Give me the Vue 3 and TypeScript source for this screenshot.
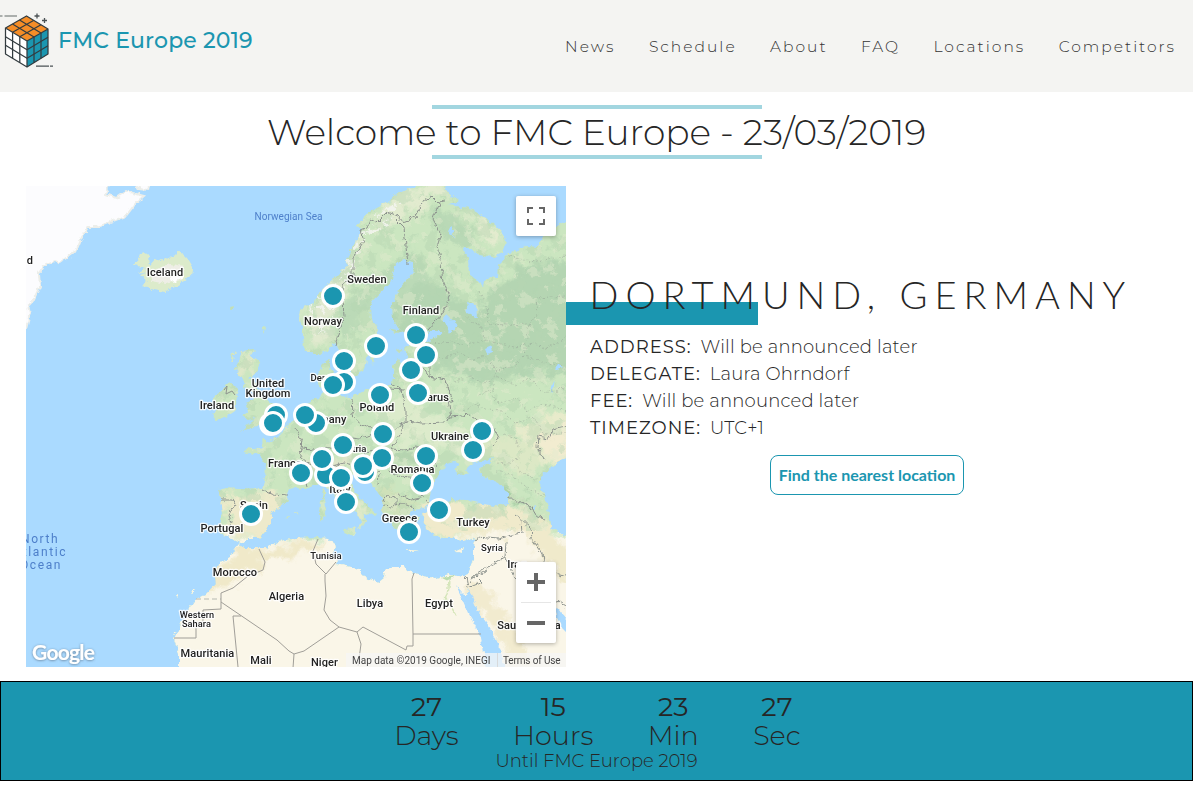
<script setup lang="ts">
interface Label { t: string; x: number; y: number; s?: number }

const nav = ['News', 'Schedule', 'About', 'FAQ', 'Locations', 'Competitors']

const details = [
  { label: 'ADDRESS:', value: 'Will be announced later' },
  { label: 'DELEGATE:', value: 'Laura Ohrndorf' },
  { label: 'FEE:', value: 'Will be announced later' },
  { label: 'TIMEZONE:', value: 'UTC+1' },
]

const countdown = [
  { n: 27, unit: 'Days' },
  { n: 15, unit: 'Hours' },
  { n: 23, unit: 'Min' },
  { n: 27, unit: 'Sec' },
]

// Pin centres in map coordinates, back to front
const pins: [number, number][] = [
  [307, 110], [390, 149], [350, 160], [400, 169], [385, 184], [318, 175], [318, 196], [307, 199],
  [354, 209], [392, 207], [250, 229], [245, 238], [247, 237], [290, 237], [279, 229], [357, 248], [456, 245],
  [447, 264], [317, 259], [356, 272], [339, 286], [337, 280], [400, 270], [396, 297],
  [300, 289], [296, 273], [275, 287], [315, 292], [320, 316], [225, 328], [413, 324], [383, 346],
]

const labels: Label[] = [
  { t: 'Iceland', x: 139, y: 90 },
  { t: 'Sweden', x: 341, y: 97 },
  { t: 'Finland', x: 395, y: 128 },
  { t: 'Norway', x: 297, y: 139 },
  { t: 'United', x: 242, y: 201 },
  { t: 'Kingdom', x: 242, y: 211 },
  { t: 'Ireland', x: 191, y: 223 },
  { t: 'Denmark', x: 304, y: 195, s: 9.5 },
  { t: 'Poland', x: 351, y: 225 },
  { t: 'Belarus', x: 404, y: 215 },
  { t: 'Germany', x: 298, y: 237 },
  { t: 'Ukraine', x: 424, y: 254 },
  { t: 'Austria', x: 325, y: 266, s: 9.5 },
  { t: 'France', x: 259, y: 281 },
  { t: 'Romania', x: 386.5, y: 287 },
  { t: 'Italy', x: 314, y: 307 },
  { t: 'Spain', x: 228, y: 323 },
  { t: 'Portugal', x: 196, y: 346 },
  { t: 'Greece', x: 373.5, y: 336 },
  { t: 'Turkey', x: 447, y: 340 },
  { t: 'Syria', x: 466, y: 365, s: 9.5 },
  { t: 'Tunisia', x: 300, y: 373, s: 9.5 },
  { t: 'Iraq', x: 491, y: 382 },
  { t: 'Morocco', x: 209, y: 390 },
  { t: 'Algeria', x: 260.5, y: 414 },
  { t: 'Libya', x: 344, y: 421 },
  { t: 'Egypt', x: 413, y: 421 },
  { t: 'Western', x: 171, y: 432, s: 9.2 },
  { t: 'Sahara', x: 170.5, y: 441, s: 9.2 },
  { t: 'Saudi Arabia', x: 503, y: 443 },
  { t: 'Mauritania', x: 181.5, y: 471 },
  { t: 'Mali', x: 235, y: 478 },
  { t: 'Niger', x: 298.5, y: 480 },
]

const continent =
  'M220 262 230 264 237 261 236 252 245 256 252 250 258 244 262 237 270 233 278 225 285 215 293 213 297 205 292 198 292 187 297 178 304 173 304 182 308 187 304 198 305 207 313 210 325 211 337 205 345 202 355 200 365 200 367 192 367 180 372 173 377 181 382 174 378 163 385 157 400 157 408 153 418 145 403 145 387 148 377 147 372 140 367 133 366 117 373 103 382 93 388 85 387 77 378 74 370 77 367 87 365 97 358 103 348 113 344 123 345 133 353 143 350 153 345 163 340 173 338 183 333 188 327 190 320 180 317 170 312 160 308 158 303 163 295 168 287 168 278 163 277 150 274 133 275 123 290 115 297 103 307 93 320 80 322 70 328 57 337 43 330 40 342 27 360 17 373 7 387 2 393 -4 417 -4 422 7 433 15 422 19 443 22 460 32 475 45 480 55 477 67 467 71 453 68 442 63 436 61 442 72 443 88 452 95 457 100 462 90 472 91 473 80 483 67 495 63 500 60 512 61 518 50 530 40 546 33 546 487 153 487 153 467 148 453 155 437 163 423 170 413 182 407 190 398 189 390 192 378 203 372 208 363 213 357 217 362 240 362 253 355 270 352 292 351 303 352 307 357 310 362 305 370 312 373 310 378 320 380 333 383 340 392 353 396 358 392 359 385 367 380 377 380 380 385 397 390 410 392 423 388 430 391 440 390 443 383 448 370 448 360 450 353 447 352 437 355 427 352 417 352 407 349 400 343 397 333 395 327 405 326 412 322 405 318 403 320 397 322 387 323 383 330 388 335 385 340 387 348 385 355 380 355 373 348 370 343 365 337 360 330 356 323 357 313 350 303 342 295 335 288 328 288 323 294 328 303 333 312 342 320 350 328 348 330 343 327 338 330 340 335 337 340 332 343 335 335 333 330 328 325 320 320 310 310 303 302 296 297 290 298 281 303 270 302 263 303 261 308 262 315 252 322 245 328 245 337 240 345 233 352 222 352 215 357 210 355 203 350 195 349 192 342 197 327 195 312 193 303 200 301 213 302 236 303 239 292 240 278 233 269 218 266Z'

const islands =
  'M216 165 228 163 224 172 235 174 230 187 222 193 230 196 236 210 245 218 255 222 258 228 251 237 238 239 225 241 214 246 222 238 230 232 222 234 216 230 222 226 220 217 229 213 226 204 217 202 219 194 213 190 210 182 213 172ZM188 211 193 208 200 198 206 197 213 204 211 210 209 225 200 231 190 234 186 229 193 222 188 216ZM206 168 210 165 207 173 204 177ZM236 143 239 139 238 148ZM204 121 209 120 206 125ZM318 344 331 342 328 350 317 346ZM294 314 299 311 300 324 296 336 293 330ZM297 305 299 303 299 311 296 311ZM380 362 393 364 386 365ZM429 365 438 361 435 367ZM312 197 320 195 322 201 316 203ZM344 172 350 167 347 178ZM370 164 377 163 374 168ZM390 330 394 331 392 335ZM258 331 264 330 262 333ZM270 326 273 327 271 328ZM150 408 152 407 152 411ZM165 406 168 404 166 409ZM98 344 101 344 100 345ZM364 143 378 145 370 147ZM522 428 530 423 527 436Z'

const iceland =
  'M108 79 113 72 117 66 123 70 124 79 130 72 136 75 140 71 147 72 152 65 158 69 161 72 167 82 166 89 158 95 148 102 139 106 128 104 122 101 116 100 122 96 114 89 120 87 110 88 119 83Z'

const greenland =
  'M-6 -6 85 -6 80 8 90 12 100 5 118 10 110 17 100 30 87 35 72 41 62 41 55 53 50 65 43 70 33 77 28 75 20 78 17 82 13 88 14 100 7 115 2 120 4 127 0 142 -6 142ZM108 -5 123 -5 121 4 112 3Z'

const seas =
  'M403 316 405 303 410 292 417 283 420 278 428 276 434 278 428 284 435 290 443 287 440 283 445 278 457 275 467 271 463 277 453 283 457 290 473 297 482 308 482 317 470 320 457 318 440 314 427 313 417 318 410 318ZM546 270 538 273 527 280 515 290 513 297 518 310 522 320 523 330 527 343 546 354ZM430 399 435 410 442 427 450 440 455 453 458 467 460 487 480 487 475 467 470 453 463 440 453 427 447 413 443 403 441 411 435 405ZM417 133 420 129 432 140 424 148ZM440 116 450 119 451 132 442 127ZM528 418 540 433 546 452 537 443 530 430ZM459 163 466 160 467 166 461 168ZM525 200 529 196 526 208ZM532 178 538 181 530 183ZM424 42 427 40 427 50 423 47ZM439 334 442 332 440 338ZM506 322 509 319 509 326Z'

const borders =
  'M365 30 362 26 351 37 344 33 340 42 335 44 338 55 327 72 327 90 316 99 317 112 318 130 313 144 309 160M362 26 372 30 377 36 389 31 398 15 405 10 411 16 413 17 407 33 415 48 411 61 415 77 417 97 424 112 416 128 402 144M369 33 378 42 380 60 382 78M411 16 420 15M365 198 376 203 380 225 380 235 396 237 418 236 425 231 422 213 427 216 420 194 403 191 396 180 385 181M404 163 404 191M326 212 327 230 335 239 349 243 365 246 380 235M350 202 378 204M425 231 445 229 456 238 467 240 473 252 467 259M377 235 374 249 364 263 378 264 390 261 403 267 411 282M270 243 276 255 274 270 283 278 276 284 281 301M276 262 287 263 305 262 319 260 325 251 335 252 348 248M283 278 298 282 318 277 333 280 339 266 350 264M334 285 342 277 357 279 364 265M352 299 353 288 338 281M356 320 365 321 377 318 384 320 388 323M358 316 361 309 370 312 370 320M357 279 365 286 375 291 399 294 403 297M373 309 385 313 399 310M236 303 247 308 262 309M195 314 206 314 209 319 203 328 205 337 201 345M399 315 404 319M449 355 451 351 472 353 490 348 496 347 495 333 490 329M482 311 494 316 504 320 510 330 518 333M495 333 505 342 506 353 517 368 519 384 540 390M480 356 479 371 467 378 450 388 444 397M479 371 488 391 508 398 540 421M462 384 450 390 456 396 442 402 440 390M540 240 527 243 522 252 512 250 511 262 519 274'
const desertBorders =
  'M233 363 239 376 237 384 222 390 207 402 195 407 195 423 177 424 177 438 170 439 170 452 148 452M195 416 251 454 263 465 268 468M215 430H207L212 481M292 353 287 365 290 378 300 388 310 376M299 388 299 395 300 410 298 424 304 434 313 441 331 446 337 441 380 464M313 441 278 465 268 468 267 482M331 446 335 458 332 480M388 387 386 393 387 448 455 448M380 464 381 460 387 460 387 448'
const regional =
  'M439 131 455 140 460 154 470 157 488 161 510 158 519 163 540 151M453 105 461 121 462 138 483 139 503 138 512 127 510 112 540 110M483 70 505 76 540 70M404 158 428 156 441 159 460 154M404 172 421 172 431 166 445 174 460 170 471 184 489 180 498 170 519 177 540 180M428 195 445 191 459 198 470 190 489 199 503 192 518 207 540 202M453 209 462 205 473 217 490 212 502 225 518 218 540 225M438 224 450 218 460 224 477 225 489 237 508 231 518 249 540 246M478 248 490 253 496 269 482 278 471 277M488 280 505 291 515 295M470 285 484 288 503 303 519 311M462 175 471 184 467 205M503 138 498 170'
</script>

<template>
  <div class="page">
    <header class="top">
      <a class="brand">
        <svg class="cube" width="54" height="60" viewBox="0 0 54 60">
          <path d="M26.500 5 5.500 17 27 30 48 18Z" fill="#f58d27" />
          <path d="M5.500 17V43L27 56V30Z" fill="#fff" />
          <path d="M48 18V43L27 56V30Z" fill="#1b96b0" />
          <g fill="none" stroke="#333c40" stroke-width="1.250" stroke-linejoin="round">
            <path d="M26.500 5 5.500 17 27 30 48 18ZM5.500 17V43L27 56V30M48 18V43L27 56" />
            <path d="M19.500 9 41 22M12.500 13 34 26M33.500 9.500 12.600 21.300M41 13.700 19.800 25.700" />
            <path d="M12.600 21.300V47.300M19.800 25.700V51.700M34 26V51.700M41 22V47.300" />
            <path d="M5.500 25.700 27 38.700 48 26.300M5.500 34.300 27 47.300 48 34.700" />
          </g>
          <g fill="none" stroke="#4b5255" stroke-width="1.300">
            <path d="M37 2.500V7.500M34.500 5H39.500M44.500 7V12M42 9.500H47M36 55.200H49M50 55.200H53" />
            <path d="M0 5H2.500M4.500 5H17" stroke="#929896" />
          </g>
        </svg>
        <span class="brand-name">FMC Europe 2019</span>
      </a>
      <nav class="nav">
        <a v-for="n in nav" :key="n">{{ n }}</a>
      </nav>
    </header>

    <div class="title">
      <i class="rule"></i>
      <h1>Welcome to FMC Europe - 23/03/2019</h1>
      <i class="rule"></i>
    </div>

    <main class="main">
      <div class="map">
        <svg width="540" height="481" viewBox="0 0 540 481">
          <defs>
            <filter id="coast" x="-5%" y="-5%" width="110%" height="110%">
              <feTurbulence type="fractalNoise" baseFrequency="0.18" numOctaves="3" seed="4" result="n" />
              <feDisplacementMap in="SourceGraphic" in2="n" scale="6" xChannelSelector="R" yChannelSelector="G" />
            </filter>
            <filter id="soft" x="-20%" y="-20%" width="140%" height="140%">
              <feGaussianBlur stdDeviation="2" result="b" />
              <feTurbulence type="fractalNoise" baseFrequency="0.07" numOctaves="4" seed="9" result="n" />
              <feDisplacementMap in="b" in2="n" scale="26" xChannelSelector="R" yChannelSelector="G" />
            </filter>
            <filter id="grainDark" x="0" y="0" width="100%" height="100%" color-interpolation-filters="sRGB">
              <feTurbulence type="fractalNoise" baseFrequency="0.06" numOctaves="5" seed="12" />
              <feColorMatrix values="0 0 0 0 0.71  0 0 0 0 0.84  0 0 0 0 0.70  12 0 0 0 -6.200" />
            </filter>
            <filter id="grainLight" x="0" y="0" width="100%" height="100%" color-interpolation-filters="sRGB">
              <feTurbulence type="fractalNoise" baseFrequency="0.075" numOctaves="5" seed="31" />
              <feColorMatrix values="0 0 0 0 0.89  0 0 0 0 0.92  0 0 0 0 0.81  0 12 0 0 -6.900" />
            </filter>
            <filter id="snow" x="0" y="0" width="100%" height="100%" color-interpolation-filters="sRGB">
              <feTurbulence type="fractalNoise" baseFrequency="0.16" numOctaves="3" seed="7" />
              <feColorMatrix values="0 0 0 0 0.96  0 0 0 0 0.96  0 0 0 0 0.95  14 0 0 0 -7.600" />
            </filter>
            <filter id="shade" x="-50%" y="-50%" width="200%" height="200%">
              <feDropShadow dx="0" dy="0.500" stdDeviation="0.900" flood-color="#456" flood-opacity="0.700" />
            </filter>
            <clipPath id="land"><path :d="continent" /><path :d="islands" /></clipPath>
            <clipPath id="north"><path d="M0 0H540V345H430L395 325 380 352 335 345 290 345 245 315H190V0Z" /></clipPath>
            <clipPath id="peaks"><path d="M283 118 310 98 333 50 350 25 375 15 362 40 342 50 330 75 322 98 312 120 300 145 288 150Z" /></clipPath>
          </defs>

          <rect width="540" height="481" fill="#aadaff" />
          <g filter="url(#coast)">
            <path :d="greenland" fill="#fcfcfe" stroke="#eceeea" stroke-width="2" />
            <path :d="iceland" fill="#dcebcb" />
            <path d="M128 84 145 78 158 80 156 94 140 98 125 95Z" fill="#eeeee6" />
            <path d="M143 91 150 86 158 90 148 97Z" fill="#fff" />
            <g clip-path="url(#land)">
              <rect x="140" y="-6" width="410" height="500" fill="#cbe6c0" />
              <g filter="url(#soft)">
                <path d="M130 352H300L450 352 490 340 560 350V500H130Z" fill="#faf6e8" />
                <path d="M198 310 240 308 258 315 240 350 203 350Z" fill="#eeeacb" />
                <path d="M388 322 420 318 480 318 520 335 545 365V400L515 370 495 345 440 352 395 345Z" fill="#f0eacb" />
                <path d="M178 408 190 380 214 363 270 355 308 357 275 367 235 378 210 398Z" fill="#f0e9c9" />
                <path d="M438 395 455 398 490 440 510 481H485L470 450Z" fill="#f2ebcf" />
                <path d="M492 242 520 228 560 220V275L520 275 495 268Z" fill="#e8ebcb" />
                <path d="M522 245 560 235V270L524 272 512 258Z" fill="#f2ecd0" />
                <path d="M435 258 480 250 512 265 505 290 470 278Z" fill="#dce8c5" />
                <path d="M370 95 400 85 425 110 450 125 470 100 500 80 560 70V190L500 188 450 198 410 180 370 150Z" fill="#b4d5b2" />
                <path d="M350 110 330 145 315 160 315 120 345 90 375 75 385 60 405 90 365 125Z" fill="#bbdab7" />
                <path d="M405 20 430 28 455 60 440 65 420 55Z" fill="#b9d9b6" />
                <path d="M440 25 460 35 475 58 460 55Z" fill="#e4ebcf" />
                <path d="M360 15 415 -5 420 8 395 20 350 45Z" fill="#e2ebcf" />
                <path d="M285 120 305 100 335 48 345 35 333 75 310 120 298 155 282 155Z" fill="#e0e9cf" />
                <path d="M345 215 380 210 415 235 440 245 450 270 420 265 370 255Z" fill="#dcebcb" />
                <path d="M275 280 320 270 335 278 325 285 285 288Z" fill="#dfe5c9" />
                <path d="M300 295 312 297 345 330 330 328Z" fill="#e2eaca" />
                <path d="M360 262 390 265 395 280 375 277Z" fill="#b4d3ae" />
                <path d="M350 300 380 308 390 325 370 335 355 320Z" fill="#cfe1b9" />
                <path d="M474 300 510 315 500 320 480 311Z" fill="#a9cfa5" />
                <path d="M214 165H235L225 190H210Z" fill="#dfe8c9" />
              </g>
              <g clip-path="url(#north)">
                <rect width="540" height="350" filter="url(#grainDark)" opacity="0.450" />
                <rect width="540" height="350" filter="url(#grainLight)" opacity="0.450" />
              </g>
              <g clip-path="url(#peaks)">
                <rect width="540" height="200" filter="url(#snow)" opacity="0.800" />
              </g>
              <path d="M415 391 430 389 423 395Z" fill="#bcdcae" />
              <path d="M423 396 421 408 419 412 425 421 431 430" fill="none" stroke="#d6e6bb" stroke-width="1.500" />
            </g>
            <path :d="seas" fill="#aadaff" />
          </g>
          <g fill="none" stroke="#8d938e" stroke-width="1" stroke-linejoin="round">
            <path :d="borders" filter="url(#coast)" />
            <path :d="desertBorders" stroke="#a09e98" />
            <path :d="regional" filter="url(#coast)" stroke-width="0.700" stroke-dasharray="2 2" opacity="0.550" />
            <path d="M170 413H195" stroke-dasharray="5 3" opacity="0.600" />
            <path d="M198 204 201 200 200 208 206 205 209 209" />
          </g>

          <g class="water-label">
            <text x="262.500" y="34" text-anchor="middle" textLength="68">Norwegian Sea</text>
            <g font-size="12" letter-spacing="1.600">
              <text x="-5" y="357">North</text>
              <text x="-12.500" y="370">Atlantic</text>
              <text x="-6" y="383">Ocean</text>
            </g>
          </g>
          <g class="land-label">
            <text x="7" y="78" text-anchor="end">Greenland</text>
            <text v-for="l in labels" :key="l.t" :x="l.x" :y="l.y" :font-size="l.s ?? 11" text-anchor="middle">{{ l.t }}</text>
          </g>
          <g fill="#1b96b0" stroke="#fff" stroke-width="3">
            <circle v-for="(p, i) in pins" :key="i" :cx="p[0]" :cy="p[1]" r="10.500" />
          </g>
          <text class="google" x="6" y="474" textLength="63" filter="url(#shade)">Google</text>
        </svg>
        <div class="legal"><span class="data">Map data ©2019 Google, INEGI</span><span class="terms">Terms of Use</span></div>
        <button class="full" aria-label="Fullscreen">
          <svg width="18" height="18" viewBox="0 0 18 18"><path d="M1 6V1H6M12 1H17V6M17 12V17H12M6 17H1V12" fill="none" stroke="#666" stroke-width="2" /></svg>
        </button>
        <div class="zoom">
          <svg width="40" height="81" viewBox="0 0 40 81">
            <path d="M11 20H29M20 11V29M11 61H29" stroke="#666" stroke-width="4" />
            <path d="M5 40.500H35" stroke="#e6e6e6" />
          </svg>
        </div>
      </div>

      <section class="info">
        <h2>DORTMUND, GERMANY</h2>
        <div class="details">
          <p v-for="d in details" :key="d.label"><b>{{ d.label }}</b><span>{{ d.value }}</span></p>
        </div>
        <button class="find">Find the nearest location</button>
      </section>
    </main>

    <footer class="count">
      <div class="units">
        <div v-for="c in countdown" :key="c.unit" class="unit">
          <span class="num">{{ c.n }}</span>
          <span class="name">{{ c.unit }}</span>
        </div>
      </div>
      <div class="until">Until FMC Europe 2019</div>
    </footer>
  </div>
</template>

<style>
body { margin: 0; background: #fff; }
</style>

<style scoped>
.page { width: 1193px; height: 802px; overflow: hidden; color: #262626; font-family: Montserrat, Inter, sans-serif; font-weight: 300; }
.page * { box-sizing: border-box; }
.top { height: 92px; background: #f4f4f2; display: flex; justify-content: space-between; }
.brand { display: flex; padding-top: 11px; }
.brand-name { margin-left: 4px; line-height: 59px; font-size: 22px; font-weight: 500; color: #1b96b0; white-space: nowrap; letter-spacing: 0.170px; }
.nav { display: flex; gap: 33.400px; padding-right: 17px; line-height: 93px; font-size: 15.500px; letter-spacing: 2px; color: #333; }
.nav a { white-space: nowrap; }
.title { padding-top: 13px; display: flex; flex-direction: column; align-items: center; }
.rule { width: 330px; height: 4px; background: #a2d6e0; }
h1 { margin: 0; height: 46px; line-height: 46px; font-size: 36px; font-weight: 300; letter-spacing: -0.110px; white-space: nowrap; }
.main { display: flex; margin: 27px 0 0 26px; height: 481px; }
.map { position: relative; width: 540px; height: 481px; overflow: hidden; font-family: Roboto, sans-serif; }
.map svg { display: block; }
.land-label { font-weight: 500; fill: #222; stroke: #fff; stroke-width: 2.500px; stroke-opacity: 0.850; stroke-linejoin: round; paint-order: stroke; letter-spacing: 0.100px; font-size: 11px; }
.water-label { font-size: 10px; font-weight: 400; fill: #4d7fca; }
.google { font-family: Lato, sans-serif; font-weight: 700; font-size: 21px; fill: #fff; }
.legal { position: absolute; right: 0; bottom: 0; height: 14px; display: flex; font-size: 10px; line-height: 15px; font-weight: 400; color: #444; background: rgba(245, 245, 245, 0.75); white-space: nowrap; }
.legal .data { padding: 0 6px; width: 151px; }
.legal .terms { padding: 0 6px 0 5px; border-left: 1px solid #d8dadb; width: 69px; letter-spacing: -0.150px; }
.full { position: absolute; right: 10px; top: 10px; width: 40px; height: 40px; padding: 11px; border: 0; border-radius: 2px; background: #fff; box-shadow: 0 1px 4px rgba(0, 0, 0, 0.3); }
.zoom { position: absolute; right: 10px; top: 376px; width: 40px; height: 81px; border-radius: 2px; background: #fff; box-shadow: 0 1px 4px rgba(0, 0, 0, 0.3); }
.info { flex: 1; padding-top: 86px; display: flex; flex-direction: column; }
h2 { margin: 0; height: 53px; padding-left: 23.500px; line-height: 45px; font-family: Lato, sans-serif; font-size: 38px; font-weight: 300; letter-spacing: 7px; white-space: nowrap; background: linear-gradient(#1b96b0, #1b96b0) 0 30px / 192px 23px no-repeat; }
.details { padding: 9px 0 0 24px; font-size: 18px; line-height: 27px; }
.details p { margin: 0; display: flex; gap: 9px; white-space: nowrap; letter-spacing: 0.190px; }
.details b { font-weight: 400; letter-spacing: 1px; }
.find { margin: 13px 0 0 204px; width: 194px; height: 40px; padding: 0 0 2px; border: 1px solid #1b96b0; border-radius: 8px; background: #fff; color: #1b96b0; font-family: Lato, sans-serif; font-size: 16px; font-weight: 700; white-space: nowrap; }
.count { margin-top: 14px; height: 100px; border: 1px solid #000; background: #1b96b0; padding-top: 10px; }
.units { display: flex; justify-content: center; gap: 54.400px; padding-left: 2px; }
.unit { display: flex; flex-direction: column; align-items: center; font-size: 27px; line-height: 29px; }
.num { font-weight: 400; }
.until { text-align: center; font-size: 18px; line-height: 22px; }
</style>
